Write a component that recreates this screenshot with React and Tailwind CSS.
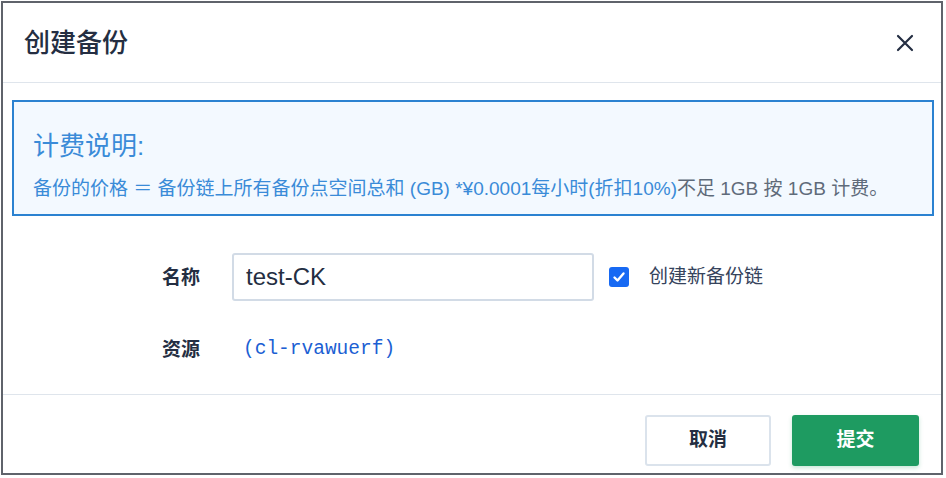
import React from "react";

const font = { fontFamily: '"Liberation Sans","Noto Sans CJK SC",sans-serif' };

export default function App() {
  return (
    <div className="w-[946px] h-[478px] bg-white p-px" style={font}>
      <div className="w-[942px] h-[474px] border-2 border-[#5f636b] flex flex-col bg-white">
        {/* header */}
        <div className="h-[80px] border-b border-[#dfe5ec] flex items-center justify-between pl-[21px] pr-[27px]">
          <div className="text-[26px] font-medium text-[#242e42] leading-none">创建备份</div>
          <svg width="18" height="18" viewBox="0 0 18 18" className="text-[#242e42]">
            <path d="M2 2 L16 16 M16 2 L2 16" stroke="currentColor" strokeWidth="2.2" strokeLinecap="round" />
          </svg>
        </div>
        {/* body */}
        <div className="flex flex-col">
          <div className="mt-[17px] ml-[9px] mr-[7px] h-[116px] border-2 border-[#2b82d1] bg-[#f3f9ff] pl-[19px] pt-[31px] flex flex-col">
            <div className="text-[26px] text-[#3a8bd8] leading-none">计费说明:</div>
            <div className="mt-[20px] text-[19px] leading-none text-[#3a8bd8] whitespace-nowrap">
              备份的价格 ＝ 备份链上所有备份点空间总和 (GB) *¥0.0001每小时(折扣10%)<span className="text-[#5f6b7a]">不足 1GB 按 1GB 计费。</span>
            </div>
          </div>
          {/* form */}
          <div className="mt-[37px] pl-[159px] flex flex-col">
            <div className="flex items-center h-[48px]">
              <div className="w-[70px] pt-[3px] text-[19px] font-bold text-[#242e42]">名称</div>
              <div className="w-[362px] h-[48px] border-2 border-[#d2dbe6] rounded-[3px] flex items-center pl-[12px] text-[24px] text-[#242e42] bg-white">
                test-CK
              </div>
              <div className="ml-[15px] w-[20px] h-[20px] rounded-[3px] bg-[#1769f3] flex items-center justify-center">
                <svg width="14" height="14" viewBox="0 0 14 14">
                  <path d="M2.5 7.5 L5.5 10.5 L11.5 3.5" stroke="white" strokeWidth="2.4" fill="none" strokeLinecap="round" strokeLinejoin="round" />
                </svg>
              </div>
              <div className="ml-[20px] text-[19px] text-[#36435c]">创建新备份链</div>
            </div>
            <div className="flex items-center mt-[25px] h-[48px]">
              <div className="w-[81px] text-[19px] font-bold text-[#242e42]">资源</div>
              <div className="text-[19.5px] text-[#1c5fd3]" style={{ fontFamily: '"Liberation Mono",monospace' }}>(cl-rvawuerf)</div>
            </div>
          </div>
        </div>
        {/* footer */}
        <div className="mt-auto border-t border-[#dfe5ec] h-[79px] flex justify-end items-start pt-[20px] pr-[22px] gap-[21px]">
          <button className="w-[126px] h-[51px] border-2 border-[#dbe3ec] rounded-[3px] bg-white text-[19px] font-bold text-[#242e42]">取消</button>
          <button className="w-[127px] h-[51px] rounded-[3px] bg-[#1e9b61] text-[19px] font-bold text-white shadow-[0_2px_4px_rgba(30,155,97,0.25)]">提交</button>
        </div>
      </div>
    </div>
  );
}
